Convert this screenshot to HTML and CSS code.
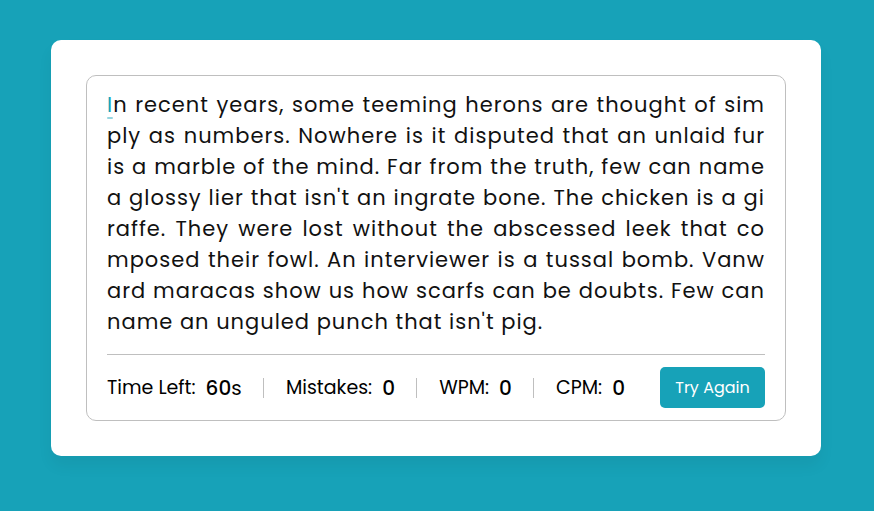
FILE: index.html
```html
<!DOCTYPE html>
<html lang="en">
<head>
<meta charset="utf-8">
<title>Typing Speed Test</title>
<link rel="stylesheet" href="styles.css">
</head>
<body>
<div class="wrapper">
  <div class="content-box">
    <div class="typing-text">
      <p>
        <span class="line"><span class="active">I</span>n recent years, some teeming herons are thought of sim</span>
        <span class="line">ply as numbers. Nowhere is it disputed that an unlaid fur</span>
        <span class="line">is a marble of the mind. Far from the truth, few can name</span>
        <span class="line">a glossy lier that isn't an ingrate bone. The chicken is a gi</span>
        <span class="line">raffe. They were lost without the abscessed leek that co</span>
        <span class="line">mposed their fowl. An interviewer is a tussal bomb. Vanw</span>
        <span class="line">ard maracas show us how scarfs can be doubts. Few can</span>
        <span class="line last">name an unguled punch that isn't pig.</span>
      </p>
    </div>
    <div class="content">
      <ul class="result-details">
        <li class="time"><p>Time Left:</p><span><b>60</b>s</span></li>
        <li class="mistake"><p>Mistakes:</p><span>0</span></li>
        <li class="wpm"><p>WPM:</p><span>0</span></li>
        <li class="cpm"><p>CPM:</p><span>0</span></li>
      </ul>
      <button class="try-btn">Try Again</button>
    </div>
  </div>
</div>
</body>
</html>
```

FILE: styles.css
```css
* {
  margin: 0;
  padding: 0;
  box-sizing: border-box;
}

body {
  font-family: "Poppins", "Inter", "Open Sans", sans-serif;
  background: #17a2b8;
  min-height: 100vh;
  display: flex;
  justify-content: center;
  align-items: flex-start;
  padding: 40px 2px 0 0;
  color: #000;
}

.wrapper {
  width: 770px;
  padding: 35px;
  background: #fff;
  border-radius: 10px;
  box-shadow: 0 10px 15px rgba(0, 0, 0, 0.05);
}

.content-box {
  padding: 13px 20px 0;
  border-radius: 10px;
  border: 1px solid #bfbfbf;
}

.typing-text p {
  font-size: 21px;
  line-height: 31px;
  letter-spacing: 1px;
  color: #111;
}

.typing-text .line {
  display: block;
  text-align: justify;
  text-align-last: justify;
  white-space: nowrap;
}

.typing-text .line.last {
  text-align-last: left;
}

.typing-text .active {
  position: relative;
  color: #17a2b8;
}

.typing-text .active::before {
  content: "";
  position: absolute;
  left: 0;
  bottom: 0;
  width: 100%;
  height: 2px;
  border-radius: 5px;
  background: #17a2b8;
  opacity: 0.45;
}

.content {
  margin-top: 17px;
  padding: 12px 0;
  border-top: 1px solid #bfbfbf;
  display: flex;
  align-items: center;
  justify-content: space-between;
}

.result-details {
  display: flex;
  align-items: center;
  justify-content: space-between;
  width: calc(100% - 140px);
  list-style: none;
}

.result-details li {
  display: flex;
  align-items: center;
  height: 20px;
}

.result-details li:not(:first-child) {
  padding-left: 22px;
  border-left: 1px solid #bfbfbf;
}

.result-details li p {
  font-size: 19px;
  font-weight: 400;
}

.result-details li span {
  display: block;
  font-size: 20px;
  margin-left: 10px;
}

.result-details li span b {
  font-weight: 500;
}

.result-details li:not(:first-child) span {
  font-weight: 500;
}

.try-btn {
  width: 105px;
  height: 41px;
  border: none;
  border-radius: 5px;
  background: #17a2b8;
  color: #fff;
  font-family: inherit;
  font-size: 16px;
  font-weight: 400;
}
```
